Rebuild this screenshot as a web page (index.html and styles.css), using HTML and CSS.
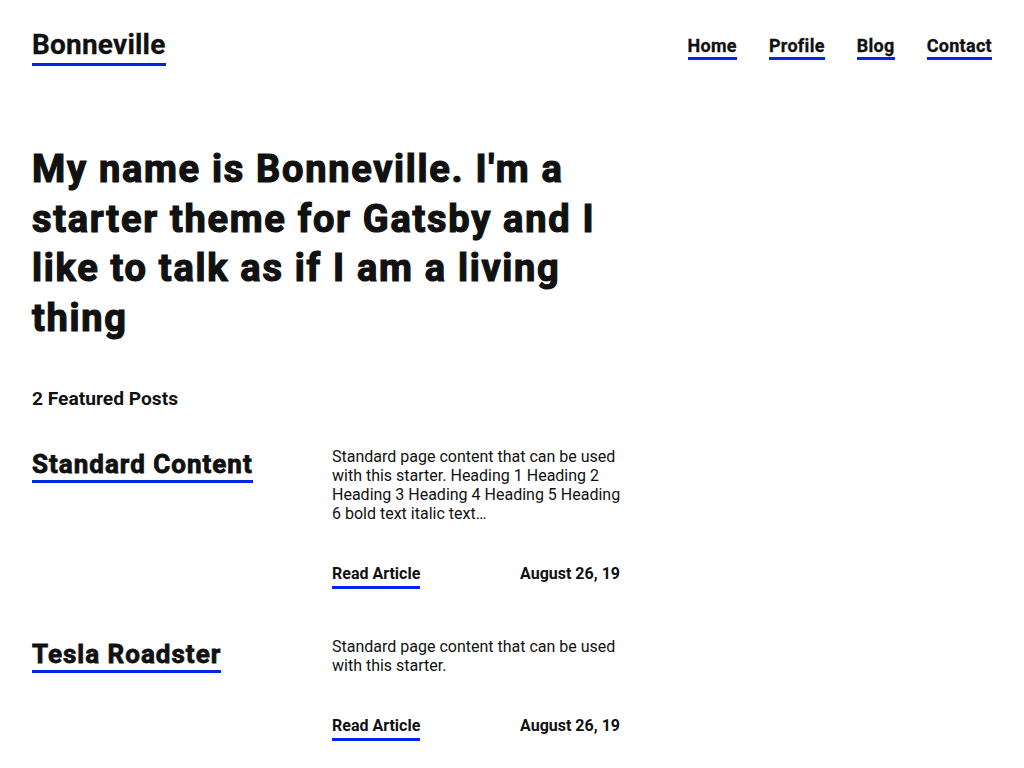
FILE: index.html
```html
<!DOCTYPE html>
<html lang="en">
<head>
<meta charset="utf-8">
<title>Bonneville</title>
<link rel="stylesheet" href="styles.css">
</head>
<body>
<header class="site-header">
  <a class="logo link" href="#">Bonneville</a>
  <nav class="nav">
    <a class="link" href="#">Home</a>
    <a class="link" href="#">Profile</a>
    <a class="link" href="#">Blog</a>
    <a class="link" href="#">Contact</a>
  </nav>
</header>
<main class="main">
  <h1 class="hero">My name is Bonneville. I'm a starter theme for Gatsby and I like to talk as if I am a living thing</h1>
  <h2 class="section-title">2 Featured Posts</h2>
  <article class="post">
    <h3 class="post-title"><a class="link" href="#">Standard Content</a></h3>
    <div class="post-body">
      <p class="excerpt">Standard page content that can be used with this starter. Heading 1 Heading 2 Heading 3 Heading 4 Heading 5 Heading 6 bold text italic text…</p>
      <div class="post-meta">
        <a class="link read" href="#">Read Article</a>
        <span class="date">August 26, 19</span>
      </div>
    </div>
  </article>
  <article class="post">
    <h3 class="post-title"><a class="link" href="#">Tesla Roadster</a></h3>
    <div class="post-body">
      <p class="excerpt">Standard page content that can be used with this starter.</p>
      <div class="post-meta">
        <a class="link read" href="#">Read Article</a>
        <span class="date">August 26, 19</span>
      </div>
    </div>
  </article>
</main>
</body>
</html>
```
FILE: styles.css
```css
* { box-sizing: border-box; }
html, body { margin: 0; padding: 0; }
body {
  font-family: Roboto, "Liberation Sans", sans-serif;
  color: #111;
  background: #fff;
}
.link {
  color: #111;
  text-decoration: none;
  font-weight: 700;
  border-bottom: 3px solid #0027e8;
  display: inline-block;
}
.site-header {
  display: flex;
  justify-content: space-between;
  align-items: flex-start;
  padding: 28px 32px 0;
}
.logo {
  font-size: 28px;
  line-height: 34px;
  padding-bottom: 1px;
  letter-spacing: 0.2px;
  -webkit-text-stroke: 0.3px #111;
}
.nav {
  display: flex;
  gap: 32px;
  padding-top: 7px;
}
.nav .link {
  font-size: 18px;
  line-height: 22px;
  padding-bottom: 0;
  letter-spacing: 0.3px;
  -webkit-text-stroke: 0.3px #111;
}
.main {
  width: 652px;
  padding: 0 32px;
}
.hero {
  font-size: 38px;
  font-weight: 700;
  line-height: 49.5px;
  letter-spacing: 1.7px;
  -webkit-text-stroke: 1.2px #111;
  margin: 79px 0 0;
}
.section-title {
  font-size: 19.2px;
  font-weight: 700;
  line-height: 22px;
  margin: 45px 0 0;
}
.post {
  display: grid;
  grid-template-columns: 300px 1fr;
  margin-top: 38px;
}
.post + .post { margin-top: 49px; }
.post-title {
  margin: 0;
  font-size: 26px;
  line-height: 32px;
}
.post-title .link {
  padding-bottom: 0;
  letter-spacing: 1px;
  -webkit-text-stroke: 0.8px #111;
}
.excerpt {
  margin: -1px -4px 0 0;
  font-size: 16px;
  line-height: 19px;
}
.post-meta {
  display: flex;
  justify-content: space-between;
  align-items: flex-start;
  margin-top: 41px;
  font-size: 16px;
  line-height: 20px;
}
.read { padding-bottom: 2px; }
.date { font-weight: 700; }
```
